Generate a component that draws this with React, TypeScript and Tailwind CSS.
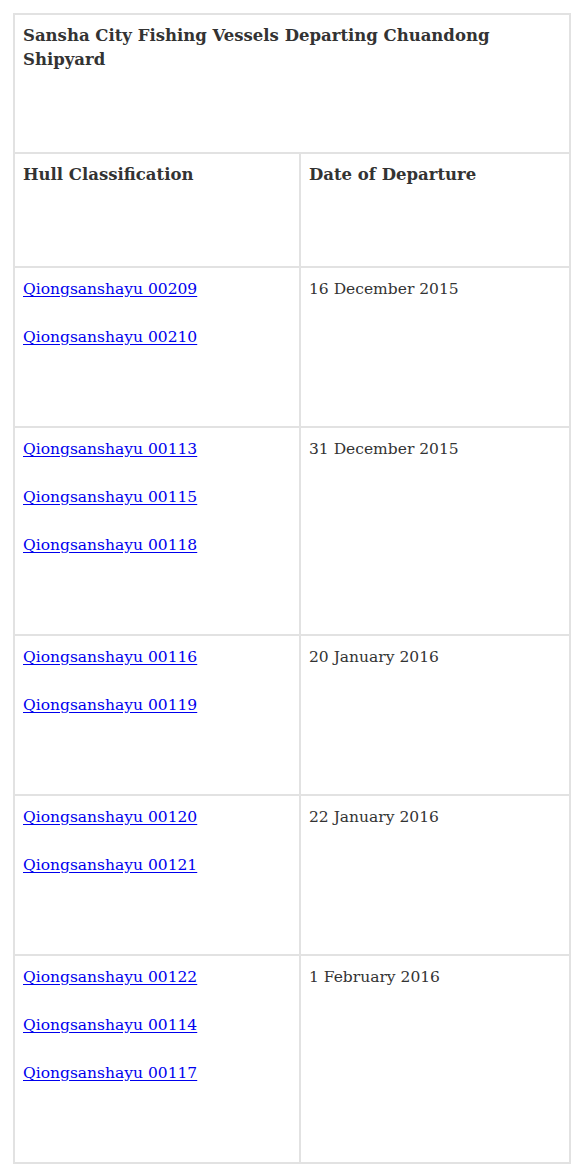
import React from "react";

const rows: { links: string[]; date: string }[] = [
  { links: ["Qiongsanshayu 00209", "Qiongsanshayu 00210"], date: "16 December 2015" },
  { links: ["Qiongsanshayu 00113", "Qiongsanshayu 00115", "Qiongsanshayu 00118"], date: "31 December 2015" },
  { links: ["Qiongsanshayu 00116", "Qiongsanshayu 00119"], date: "20 January 2016" },
  { links: ["Qiongsanshayu 00120", "Qiongsanshayu 00121"], date: "22 January 2016" },
  { links: ["Qiongsanshayu 00122", "Qiongsanshayu 00114", "Qiongsanshayu 00117"], date: "1 February 2016" },
];

export default function App() {
  return (
    <div className="bg-white min-h-[1176px] pl-[13px] pt-[13px] text-[#333333] font-['DejaVu_Serif',serif] text-[15.5px] leading-[24px]">
      <table className="w-[558px] table-fixed border-separate border-spacing-0 border border-[#e2e2e2]">
        <colgroup>
          <col className="w-[286px]" />
          <col className="w-[270px]" />
        </colgroup>
        <tbody>
          <tr>
            <td colSpan={2} className="border border-[#e2e2e2] pl-[8px] pr-[9px] pt-[9px] pb-[80px] align-top font-bold text-[16.5px]">
              Sansha City Fishing Vessels Departing Chuandong Shipyard
            </td>
          </tr>
          <tr>
            <th className="border border-[#e2e2e2] pl-[8px] pr-[9px] pt-[9px] pb-[79px] align-top text-left font-bold text-[16.5px]">
              Hull Classification
            </th>
            <th className="border border-[#e2e2e2] pl-[8px] pr-[9px] pt-[9px] pb-[79px] align-top text-left font-bold text-[16.5px]">
              Date of Departure
            </th>
          </tr>
          {rows.map((r) => (
            <tr key={r.date}>
              <td className="border border-[#e2e2e2] pl-[8px] pr-[9px] pt-[9px] pb-[77px] align-top">
                <div className="flex flex-col gap-[24px]">
                  {r.links.map((l) => (
                    <a key={l} href="#" className="text-[#0000ee] underline underline-offset-[2px]">
                      {l}
                    </a>
                  ))}
                </div>
              </td>
              <td className="border border-[#e2e2e2] pl-[8px] pr-[9px] pt-[9px] pb-[77px] align-top">
                {r.date}
              </td>
            </tr>
          ))}
        </tbody>
      </table>
    </div>
  );
}
